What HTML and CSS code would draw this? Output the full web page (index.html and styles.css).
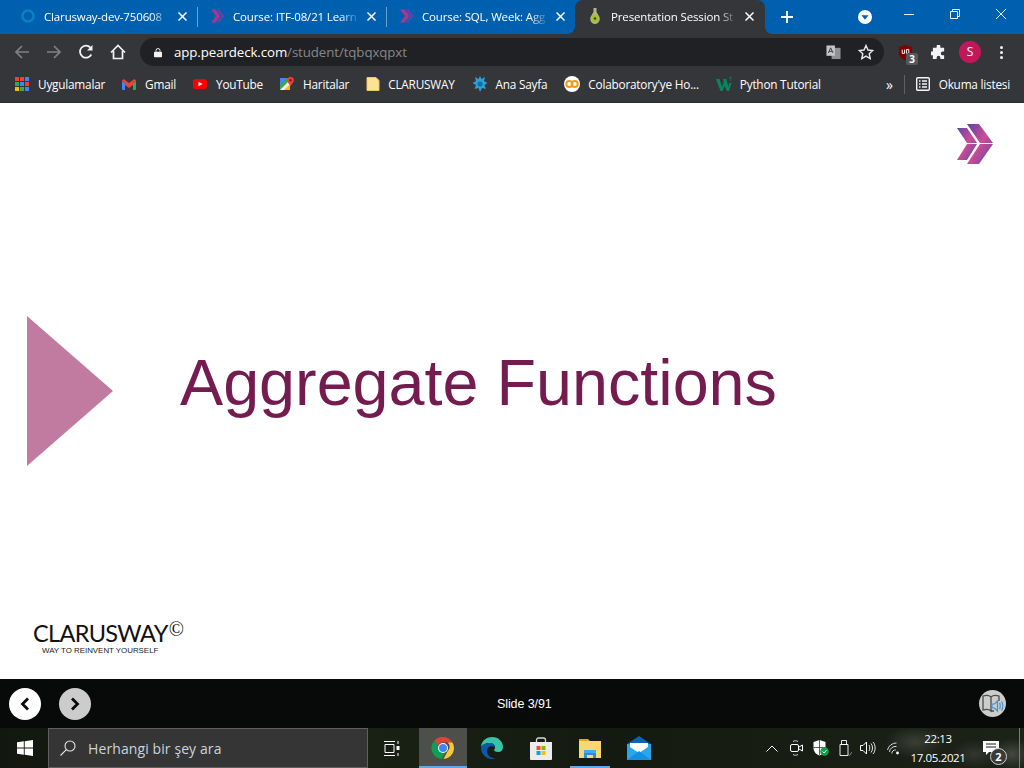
FILE: index.html
```html
<!DOCTYPE html>
<html lang="en">

<head>
    <meta charset='utf-8'>
    <title>Presentation Session Student</title>
    <link rel="stylesheet" href="styles.css">
</head>

<body>
    <div class="tabstrip">
        <div class="tab">
            <svg class="favicon" viewBox="0 0 16 16"><circle cx="8" cy="8" r="5.5" fill="none" stroke="#0f7fc4" stroke-width="2.6"/></svg>
            <span class="tab-title">Clarusway-dev-750608</span>
            <svg class="tab-x" viewBox="0 0 9 9"><path d="M.5.5l8 8M8.500.5l-8 8" stroke="#fff" stroke-width="1.500"/></svg>
        </div>
        <div class="tab sep">
            <svg class="favicon" viewBox="0 0 16 16"><path d="M2 1.500h4.500l5 6.500-5 6.500H2L7 8z" fill="#a8378f"/><path d="M7.500 1.500h3L15.500 8l-5 6.500h-3l5-6.500z" fill="#5f45a8"/></svg>
            <span class="tab-title">Course: ITF-08/21 Learn</span>
            <svg class="tab-x" viewBox="0 0 9 9"><path d="M.5.5l8 8M8.500.5l-8 8" stroke="#fff" stroke-width="1.500"/></svg>
        </div>
        <div class="tab sep">
            <svg class="favicon" viewBox="0 0 16 16"><path d="M2 1.500h4.500l5 6.500-5 6.500H2L7 8z" fill="#a8378f"/><path d="M7.500 1.500h3L15.500 8l-5 6.500h-3l5-6.500z" fill="#5f45a8"/></svg>
            <span class="tab-title">Course: SQL, Week: Agg</span>
            <svg class="tab-x" viewBox="0 0 9 9"><path d="M.5.5l8 8M8.500.5l-8 8" stroke="#fff" stroke-width="1.500"/></svg>
        </div>
        <div class="tab active">
            <svg class="favicon" viewBox="0 0 16 16"><path d="M6.500 0h3v4l3 5c1 4-1.500 7-4.500 7s-5.500-3-4.500-7l3-5z" fill="#b9b48c"/><ellipse cx="8" cy="10.500" rx="3.600" ry="4" fill="#a5c22c"/><circle cx="8" cy="10.500" r="1.300" fill="#3c4a18"/></svg>
            <span class="tab-title">Presentation Session St</span>
            <svg class="tab-x" viewBox="0 0 9 9"><path d="M.5.5l8 8M8.500.5l-8 8" stroke="#fff" stroke-width="1.500"/></svg>
        </div>
        <svg class="newtab" viewBox="0 0 12 12"><path d="M6 0v12M0 6h12" stroke="#fff" stroke-width="1.800"/></svg>
        <div class="win-btns">
            <svg class="profile-drop" viewBox="0 0 14 14"><circle cx="7" cy="7" r="7" fill="#fff"/><path d="M3.500 5.300h7L7 9.800z" fill="#0060b0"/></svg>
            <svg class="win" viewBox="0 0 46 12"><path d="M18 6.500h10" stroke="#e8eef6"/></svg>
            <svg class="win" viewBox="0 0 46 12"><path d="M18.500 3.500h7v7h-7zM20.500 3.500v-2h7v7h-2" fill="none" stroke="#e8eef6"/></svg>
            <svg class="win" viewBox="0 0 46 12"><path d="M18 1l10 10M28 1L18 11" stroke="#e8eef6"/></svg>
        </div>
    </div>

    <div class="toolbar">
        <svg class="nav" viewBox="0 0 16 16"><path d="M15 8H2M8 2L2 8l6 6" fill="none" stroke="#7f8184" stroke-width="1.700"/></svg>
        <svg class="nav" viewBox="0 0 16 16"><path d="M1 8h13M8 2l6 6-6 6" fill="none" stroke="#7f8184" stroke-width="1.700"/></svg>
        <svg class="nav" viewBox="0 0 16 16"><path d="M13.300 10.500A6 6 0 1 1 12.400 3.600" fill="none" stroke="#f1f3f4" stroke-width="1.800"/><path d="M14.500 1v5.500H9z" fill="#f1f3f4"/></svg>
        <svg class="nav" viewBox="0 0 16 16"><path d="M1 8.500L8 1.500l7 7M3.500 7v7.500h9V7" fill="none" stroke="#f1f3f4" stroke-width="1.700"/></svg>
        <div class="omnibox">
            <svg class="lock" viewBox="0 0 10 12"><path d="M2.500 5V3.500a2.500 2.500 0 0 1 5 0V5" fill="none" stroke="#f1f3f4" stroke-width="1.200"/><rect y="5" width="10" height="7" rx="1" fill="#f1f3f4"/></svg>
            <span class="url">app.peardeck.com<span class="url-path">/student/tqbqxqpxt</span></span>
            <svg class="translate" viewBox="0 0 16 16"><rect x="6" y="3" width="9.500" height="12" fill="#8f9194"/><rect x="0.500" y="0.500" width="9" height="11" fill="#c4c6c8"/><path d="M2.500 8.500L5 3l2.500 5.500M3.500 6.800h3" fill="none" stroke="#35363a" stroke-width="1"/></svg>
            <svg class="star" viewBox="0 0 16 16"><path d="M8 1.500l2 4.500 4.800.5-3.600 3.200 1 4.800L8 12.100l-4.200 2.400 1-4.800L1.200 6.500 6 6z" fill="none" stroke="#e8eaed" stroke-width="1.400"/></svg>
        </div>
        <div class="ext ublock">
            <svg viewBox="0 0 16 18"><path d="M8 1l7 2.300v6c0 4-3.500 6.700-7 8-3.500-1.300-7-4-7-8v-6z" fill="#800000"/><path d="M4.500 6v4h2.500V6M9 10V6h2.500v4z" fill="none" stroke="#fff" stroke-width="1"/></svg>
            <span class="badge">3</span>
        </div>
        <svg class="ext puzzle" viewBox="0 0 16 16"><path d="M6 1.500a2 2 0 0 1 4 0V3h4v4h-1.500a2 2 0 0 0 0 4H14v4h-4v-1.500a2 2 0 0 0-4 0V15H2v-4H.5a2 2 0 0 1 0-4H2V3h4z" fill="#f1f3f4"/></svg>
        <span class="avatar">S</span>
        <span class="menu-dots"><i></i><i></i><i></i></span>
    </div>

    <div class="bookmarks">
        <div class="bm bm-apps">
            <span class="apps-grid"><i class="r"></i><i class="r"></i><i class="b"></i><i class="g"></i><i class="b"></i><i class="r"></i><i class="y"></i><i class="g"></i><i class="b"></i></span>
            Uygulamalar
        </div>
        <div class="bm">
            <svg class="bm-ico" viewBox="0 0 14 12"><path d="M0 3v8a1 1 0 0 0 1 1h2V5z" fill="#4285f4"/><path d="M14 3v8a1 1 0 0 1-1 1h-2V5z" fill="#34a853"/><path d="M0 3l3 2v2l4 3 4-3V5l3-2a1.700 1.700 0 0 0-3-1L7 5 3 2a1.700 1.700 0 0 0-3 1z" fill="#ea4335"/></svg>
            Gmail
        </div>
        <div class="bm">
            <svg class="bm-ico" viewBox="0 0 14 10"><rect width="14" height="10" rx="2.500" fill="#f00"/><path d="M5.500 2.800L9.500 5l-4 2.200z" fill="#fff"/></svg>
            YouTube
        </div>
        <div class="bm">
            <svg class="bm-ico" viewBox="0 0 14 14"><path d="M0 1h10v12H0z" fill="#34a853"/><path d="M0 13L10 3v10z" fill="#f4f4f0"/><path d="M0 1h7L0 8z" fill="#4285f4"/><path d="M4 13l6-6v6z" fill="#fbbc04"/><path d="M10.500 0a3.300 3.300 0 0 1 3.300 3.300c0 2.200-2 3.500-3.300 6-1.300-2.500-3.300-3.800-3.300-6A3.300 3.300 0 0 1 10.500 0z" fill="#ea4335"/><circle cx="10.500" cy="3.300" r="1.200" fill="#7a1b12"/></svg>
            Haritalar
        </div>
        <div class="bm">
            <svg class="bm-ico tight" viewBox="0 0 14 14"><path d="M1 .5h9l3 3v10H1z" fill="#fde293" stroke="#e8c766"/></svg>
            CLARUSWAY
        </div>
        <div class="bm">
            <svg class="bm-ico wide" viewBox="0 0 16 16"><path d="M8 0l1.500 3L13 1l-1 4 3.500 2-3 2 1.500 4-4-1-2 4-1.500-4-4 1 1.500-4-3.500-2 3.500-2-1-4 3.500 2z" fill="#2a9fd8"/><circle cx="8" cy="8" r="2.500" fill="#0f6ea6"/></svg>
            Ana Sayfa
        </div>
        <div class="bm">
            <svg class="bm-ico wide" viewBox="0 0 16 16"><circle cx="8" cy="8" r="8" fill="#fff"/><circle cx="5.300" cy="8" r="3" fill="none" stroke="#f09a16" stroke-width="2"/><circle cx="10.700" cy="8" r="3" fill="none" stroke="#f09a16" stroke-width="2"/></svg>
            Colaboratory'ye Ho...
        </div>
        <div class="bm">
            <svg class="bm-ico wide" viewBox="0 0 16 14"><path d="M0 2h3.500L6 10 7.800 5 7 2h3.300l2 8 1-4h2.200l-2.500 8h-2L8.500 9 6.500 14h-2z" fill="#04885f"/><path d="M13 .5h2.500L14.200 2c1 0 1.300 1.500 0 1.800" fill="none" stroke="#04885f" stroke-width=".7"/></svg>
            Python Tutorial
        </div>
        <div class="bm-end">
            <span class="more">&#187;</span>
            <span class="bm-div"></span>
            <svg class="bm-ico" viewBox="0 0 14 14"><rect x=".7" y=".7" width="12.600" height="12.600" rx="1" fill="none" stroke="#f1f3f4" stroke-width="1.400"/><path d="M3 4h1.500M6 4h5M3 7h1.500M6 7h5M3 10h1.500M6 10h5" stroke="#f1f3f4" stroke-width="1.300"/></svg>
            Okuma listesi
        </div>
    </div>

    <div class="slide">
        <svg class="slide-logo" viewBox="0 0 36 40">
            <defs>
                <linearGradient id="lg" x1="0" y1="0" x2="1" y2="1">
                    <stop offset="0" stop-color="#5c45a3"/>
                    <stop offset="0.500" stop-color="#cf4b95"/>
                    <stop offset="1" stop-color="#4e4aa8"/>
                </linearGradient>
            </defs>
            <path d="M0 4h10l10 15H10zM10 20h10L10 36H0z" fill="url(#lg)"/>
            <path d="M10 0h12l14 19H23zM23 20h13L22 40H10z" fill="url(#lg)"/>
        </svg>
        <div class="hero">
            <svg class="hero-arrow" viewBox="0 0 86 150"><path d="M0 0l86 75-86 75z" fill="#c27ba0"/></svg>
            <h1 class="hero-title">Aggregate Functions</h1>
        </div>
        <div class="brand">
            <div class="brand-name">CLARUSWAY<span class="brand-c">&copy;</span></div>
            <div class="brand-sub">WAY TO REINVENT YOURSELF</div>
        </div>
    </div>

    <div class="player">
        <span class="round white"><svg viewBox="0 0 12 14"><path d="M9 1.500L3.500 7 9 12.500" fill="none" stroke="#0a0a0a" stroke-width="2.800"/></svg></span>
        <span class="round grey"><svg viewBox="0 0 12 14"><path d="M3 1.500L8.500 7 3 12.500" fill="none" stroke="#0a0a0a" stroke-width="2.800"/></svg></span>
        <span class="slide-count">Slide 3/91</span>
        <span class="round grey audio">
            <svg viewBox="0 0 22 20"><path d="M1 2c3-1 6-1 8 1v14c-2-2-5-2-8-1zM9 3c2-2 5-2 8-1v5M9 17h3" fill="none" stroke="#4a4c4e" stroke-width="1.300"/><path d="M10 10h2.500l3-3v10l-3-3H10z" fill="none" stroke="#3f93d3" stroke-width="1.200"/><path d="M17.500 9c1 1 1 5 0 6M19.500 7.500c1.800 2 1.800 7 0 9" fill="none" stroke="#3f93d3" stroke-width="1.200"/></svg>
        </span>
    </div>

    <div class="taskbar">
        <svg class="start" viewBox="0 0 16 16"><path d="M0 2.300l6.800-1v6.200H0zM7.700 1.200L16 0v7.500H7.700zM0 8.400h6.800v6.300l-6.800-1zM7.700 8.400H16V16l-8.300-1.200z" fill="#fff"/></svg>
        <div class="search">
            <svg class="search-ico" viewBox="0 0 16 16"><circle cx="10" cy="6" r="5" fill="none" stroke="#e6e6e6" stroke-width="1.100"/><path d="M6.300 9.700L.5 15.500" stroke="#e6e6e6" stroke-width="1.100"/></svg>
            Herhangi bir şey ara
        </div>
        <div class="task taskview">
            <svg viewBox="0 0 16 15"><path d="M0 .5h11M0 14.500h11M1 3.500h9v8H1z" fill="none" stroke="#fff"/><path d="M14 0v3M14 12v3" stroke="#fff"/><rect x="12.500" y="5" width="3" height="4" fill="#fff"/></svg>
        </div>
        <div class="task running">
            <svg class="app" viewBox="0 0 24 24">
                <path d="M12 1a11 11 0 0 1 9.500 5.500H12a5.500 5.500 0 0 0-5.200 3.700L3.400 4.500A11 11 0 0 1 12 1z" fill="#db4437"/>
                <path d="M21.500 6.500A11 11 0 0 1 12.500 23l4.200-8a5.500 5.500 0 0 0 0-8.500z" fill="#fcc934"/>
                <path d="M3.400 4.500l4.500 7.800a5.500 5.500 0 0 0 6.300 4.200L10.800 23A11 11 0 0 1 3.400 4.500z" fill="#0f9d58"/>
                <circle cx="12" cy="12" r="5" fill="#fff"/><circle cx="12" cy="12" r="4" fill="#4285f4"/>
            </svg>
        </div>
        <div class="task">
            <svg class="app" viewBox="0 0 24 24">
                <path d="M1 12C1 5 6 1 12 1c7 0 11 5 11 10 0 3-2 5-5 5-2 0-4-1-4-2 1-1 1-2 1-3 0-2-2-4-5-4-4 0-9 2-9 5z" fill="#39c4a8"/>
                <path d="M1 12c0-3 5-5 9-5 3 0 5 2 5 4-4-2-8 0-8 4 0 3 2 6 6 7 3 1 6 0 8-2-2 2-5 3-9 3C6 23 1 18 1 12z" fill="#0c59a4"/>
            </svg>
        </div>
        <div class="task">
            <svg class="app" viewBox="0 0 24 24">
                <path d="M7.500 6V4a2 2 0 0 1 2-2h5a2 2 0 0 1 2 2v2" fill="none" stroke="#d9d9d9" stroke-width="1.300"/>
                <path d="M1 6h22v17a1 1 0 0 1-1 1H2a1 1 0 0 1-1-1z" fill="#ececec"/>
                <rect x="7.500" y="10" width="4" height="4" fill="#f25022"/><rect x="12.500" y="10" width="4" height="4" fill="#7fba00"/><rect x="7.500" y="15" width="4" height="4" fill="#00a4ef"/><rect x="12.500" y="15" width="4" height="4" fill="#ffb900"/>
            </svg>
        </div>
        <div class="task open">
            <svg class="app" viewBox="0 0 24 24">
                <path d="M1 3h9l2 2h11v6H1z" fill="#e0a82e"/><rect x="1" y="5" width="22" height="17" fill="#f9d774"/>
                <path d="M6 22v-7h12v7h-3v-3H9v3z" fill="#2b8fd6"/><rect x="6" y="14" width="12" height="3" fill="#3ab0e8"/>
            </svg>
        </div>
        <div class="task">
            <svg class="app" viewBox="0 0 24 24">
                <path d="M0 8l12-8 12 8v2H0z" fill="#0a64b4"/><path d="M0 8h24v16H0z" fill="#28a8ea"/>
                <path d="M3 7h18v4l-9 6-9-6z" fill="#fff"/><path d="M0 24l12-9 12 9z" fill="#1490df"/>
            </svg>
        </div>
        <div class="tray">
            <svg class="t-chev" viewBox="0 0 12 7"><path d="M.5 6.500L6 1l5.500 5.500" fill="none" stroke="#fff"/></svg>
            <svg class="t-cam" viewBox="0 0 13 16"><path d="M3 1.500c2-1 3-1 5 0M3 14.500c2 1 3 1 5 0" fill="none" stroke="#fff" stroke-width=".8"/><rect x=".5" y="4.500" width="8" height="7" rx="1.500" fill="none" stroke="#fff"/><path d="M9 7l3.500-2v6L9 9" fill="none" stroke="#fff"/></svg>
            <svg class="t-shield" viewBox="0 0 16 16"><path d="M6.500 0l6 2v6c0 4-3 6.500-6 7.500-3-1-6-3.500-6-7.500V2z" fill="#fff"/><path d="M6.500 0v15M.5 7.500h12" stroke="#1a1d17" stroke-width=".7"/><circle cx="11.500" cy="11.500" r="4.300" fill="#12a14b"/><path d="M9.500 11.500l1.500 1.500 2.500-2.800" fill="none" stroke="#fff" stroke-width="1"/></svg>
            <svg class="t-usb" viewBox="0 0 13 16"><path d="M2.500.5h5v4h-5zM1 4.500h8v11H1z" fill="none" stroke="#fff" stroke-width=".9"/><path d="M9 14l1.500 1.500L13 12" fill="none" stroke="#9a9a9a" stroke-width=".8"/></svg>
            <svg class="t-vol" viewBox="0 0 16 14"><path d="M.5 4.500h2.500L6.500 1v12L3 9.500H.5z" fill="none" stroke="#fff"/><path d="M9 4c1 1.500 1 4.500 0 6M11 2.500c2 2 2 7 0 9M13 1c2.800 3 2.800 9 0 12" fill="none" stroke="#fff" stroke-width=".9"/></svg>
            <svg class="t-wifi" viewBox="0 0 14 13"><path d="M.5 8a9 9 0 0 1 9-7M2.500 10a6 6 0 0 1 7-5.500M4.800 11.500a3.500 3.500 0 0 1 4-3.500" fill="none" stroke="#d9d9d9" stroke-width="1"/><circle cx="10.500" cy="11" r="1.400" fill="#fff"/></svg>
            <div class="clock"><span>22:13</span><span>17.05.2021</span></div>
            <div class="notif">
                <svg viewBox="0 0 16 15"><path d="M0 0h16v11H6l-3 3v-3H0z" fill="#fff"/><path d="M3 3h10M3 6h10" stroke="#1a1d17"/></svg>
                <span class="notif-count">2</span>
            </div>
            <span class="show-desktop"></span>
        </div>
    </div>
</body>

</html>
```

FILE: styles.css
```css
* {
    box-sizing: border-box;
}

html,
body {
    margin: 0;
    height: 100%;
    overflow: hidden;
}

body {
    width: 1024px;
    height: 768px;
    font-family: "Open Sans", "Noto Sans", sans-serif;
    font-size: 12px;
    color: #fff;
    background: #fff;
}

svg {
    display: block;
    flex: none;
}

/* tab strip */

.tabstrip {
    display: flex;
    align-items: center;
    height: 34px;
    padding-left: 8px;
    background: #0060b0;
}

.tab {
    display: flex;
    align-items: center;
    width: 189px;
    height: 34px;
    padding: 0 7px 2px 12px;
    position: relative;
}

.tab.sep::before {
    content: "";
    position: absolute;
    left: 0;
    top: 7px;
    height: 20px;
    width: 1px;
    background: #6f9fcd;
}

.tab.active {
    width: 190px;
    padding-right: 8px;
    background: #35363a;
    border-radius: 8px 8px 0 0;
}

.tab.active::before,
.tab.active::after {
    content: "";
    position: absolute;
    bottom: 0;
    width: 8px;
    height: 8px;
}

.tab.active::before {
    left: -8px;
    background: radial-gradient(circle at 0 0, transparent 8px, #35363a 8px);
}

.tab.active::after {
    right: -8px;
    background: radial-gradient(circle at 100% 0, transparent 8px, #35363a 8px);
}

.favicon {
    width: 16px;
    height: 16px;
    margin-right: 8px;
}

.tab-title {
    flex: 1;
    overflow: hidden;
    white-space: nowrap;
    font-size: 11.500px;
    letter-spacing: -0.150px;
    -webkit-mask-image: linear-gradient(to right, #000 84%, transparent 99%);
    mask-image: linear-gradient(to right, #000 84%, transparent 99%);
}

.tab-x {
    width: 9px;
    height: 9px;
    margin: 0 3.500px 0 6px;
}

.newtab {
    width: 12px;
    height: 12px;
    margin-left: 16px;
}

.win-btns {
    display: flex;
    align-items: center;
    margin-left: auto;
}

.profile-drop {
    width: 14px;
    height: 14px;
    margin-right: 14px;
    margin-top: -1px;
}

.win {
    width: 46px;
    height: 12px;
    margin-top: -6px;
}

/* toolbar */

.toolbar {
    display: flex;
    align-items: center;
    height: 34px;
    padding: 2px 0 0 14px;
    background: #35363a;
}

.nav {
    width: 16px;
    height: 16px;
    margin-right: 16px;
}

.omnibox {
    display: flex;
    align-items: center;
    width: 744px;
    height: 28px;
    margin-left: -2px;
    padding: 0 10px 0 14px;
    border-radius: 14px;
    background: #202124;
}

.lock {
    width: 8px;
    height: 11px;
    margin-right: 12px;
}

.url {
    font-size: 13.300px;
    letter-spacing: -0.100px;
}

.url-path {
    color: #85878a;
}

.translate {
    width: 15px;
    height: 15px;
    margin-left: auto;
}

.star {
    width: 16px;
    height: 16px;
    margin-left: 17px;
}

.ext {
    flex: none;
}

.ublock {
    position: relative;
    width: 15px;
    height: 17px;
    margin-left: 14px;
}

.badge {
    position: absolute;
    left: 8px;
    top: 9px;
    width: 12px;
    height: 12px;
    border-radius: 2px;
    background: #55575a;
    font-size: 10px;
    font-weight: 700;
    line-height: 12px;
    text-align: center;
}

.puzzle {
    width: 15px;
    height: 15px;
    margin-left: 18px;
}

.avatar {
    width: 22px;
    height: 22px;
    margin-left: 13px;
    border-radius: 50%;
    background: #c2185b;
    font-size: 12px;
    line-height: 22px;
    text-align: center;
}

.menu-dots {
    display: flex;
    flex-direction: column;
    gap: 2px;
    margin-left: 19px;
}

.menu-dots i {
    width: 3px;
    height: 3px;
    border-radius: 50%;
    background: #f1f3f4;
}

/* bookmarks */

.bookmarks {
    display: flex;
    align-items: center;
    height: 35px;
    padding: 0 0 2px 15px;
    background: #35363a;
    border-bottom: 1px solid #2a2b2e;
    font-size: 11.800px;
    letter-spacing: -0.220px;
}

.bm {
    display: flex;
    align-items: center;
    margin-right: 17px;
    white-space: nowrap;
}

.bm-ico {
    width: 14px;
    height: 14px;
    margin-right: 9px;
}

.bm-ico.tight {
    margin-right: 8px;
}

.bm-ico.wide {
    width: 16px;
    height: 16px;
    margin-right: 8px;
}

.apps-grid {
    display: grid;
    grid-template-columns: repeat(3, 4px);
    gap: 1px;
    margin-right: 9px;
}

.apps-grid i {
    height: 4px;
}

.apps-grid .r {
    background: #ea4335;
}

.apps-grid .b {
    background: #4285f4;
}

.apps-grid .g {
    background: #34a853;
}

.apps-grid .y {
    background: #fbbc04;
}

.bm-end {
    display: flex;
    align-items: center;
    margin-left: auto;
    margin-right: 14px;
    white-space: nowrap;
}

.more {
    font-size: 14px;
    margin-right: 11px;
}

.bm-div {
    width: 1px;
    height: 19px;
    margin-right: 11px;
    background: #5f6064;
}

/* slide */

.slide {
    display: flex;
    flex-direction: column;
    height: 576px;
    background: #fff;
}

.slide-logo {
    width: 36px;
    height: 40px;
    margin: 21px 31px 0 auto;
}

.hero {
    display: flex;
    align-items: center;
    margin-top: 152px;
    padding-left: 27px;
}

.hero-arrow {
    width: 86px;
    height: 150px;
}

.hero-title {
    margin: 0 0 18px 67px;
    font-family: "Liberation Sans", Arial, sans-serif;
    font-size: 64.700px;
    font-weight: 400;
    color: #741b4f;
}

.brand {
    margin-top: auto;
    padding: 0 0 22px 33px;
    color: #111;
}

.brand-name {
    font-family: "Lato", "Liberation Sans", sans-serif;
    font-size: 23.500px;
    line-height: 23px;
    letter-spacing: -0.650px;
}

.brand-c {
    position: relative;
    top: -6px;
    margin-left: 1px;
    font-family: "Liberation Serif", serif;
    font-size: 20px;
}

.brand-sub {
    margin-top: -2px;
    padding-left: 9px;
    font-family: "Liberation Sans", Arial, sans-serif;
    font-size: 7.900px;
    line-height: 12px;
    color: #222;
}

/* player bar */

.player {
    display: flex;
    align-items: center;
    height: 49px;
    padding: 0 18px 0 9px;
    background: #080a0a;
}

.round {
    display: flex;
    align-items: center;
    justify-content: center;
    width: 32px;
    height: 32px;
    border-radius: 50%;
}

.round svg {
    width: 12px;
    height: 14px;
}

.round.white {
    background: #fff;
    margin-right: 18px;
}

.round.grey {
    background: #cbcccb;
}

.slide-count {
    margin-left: 406px;
    font-family: "Liberation Sans", Arial, sans-serif;
    font-size: 12.500px;
    letter-spacing: -0.100px;
}

.round.audio {
    width: 27px;
    height: 27px;
    margin-left: auto;
}

.round.audio svg {
    width: 22px;
    height: 20px;
}

/* windows taskbar */

.taskbar {
    display: flex;
    align-items: center;
    height: 40px;
    background:
        radial-gradient(ellipse 30px 16px at 915px 14px, #3a3f35, transparent),
        radial-gradient(ellipse 24px 14px at 975px 26px, #33372f, transparent),
        radial-gradient(ellipse 20px 16px at 1012px 26px, #45483f, transparent),
        linear-gradient(90deg, #12180f, #1b2215 30%, #141a10 60%, #1c2218);
}

.start {
    width: 16px;
    height: 16px;
    margin: 0 15px 0 17px;
}

.search {
    display: flex;
    align-items: center;
    width: 320px;
    height: 40px;
    padding-left: 11px;
    background: #353535;
    border: 1px solid #5f5f5f;
    font-size: 14px;
    letter-spacing: 0.100px;
    color: #c9d4dc;
}

.search-ico {
    width: 16px;
    height: 16px;
    margin-right: 12px;
}

.task {
    display: flex;
    align-items: center;
    justify-content: center;
    width: 49px;
    height: 40px;
}

.task.taskview {
    width: 51px;
    padding-right: 3px;
}

.taskview svg {
    width: 16px;
    height: 15px;
}

.task.running {
    width: 48px;
    background: linear-gradient(#62a8e5, #62a8e5) bottom / 100% 2px no-repeat #4c4f4a;
}

.task.open {
    background: linear-gradient(#62a8e5, #62a8e5) bottom / 40px 2px no-repeat;
}

.app {
    width: 24px;
    height: 24px;
}

.tray {
    display: flex;
    align-items: center;
    margin-left: auto;
    height: 40px;
}

.t-chev {
    width: 12px;
    height: 7px;
    margin-right: 12px;
}

.t-cam {
    width: 13px;
    height: 16px;
    margin-right: 10px;
}

.t-shield {
    width: 16px;
    height: 16px;
    margin-right: 10px;
}

.t-usb {
    width: 13px;
    height: 16px;
    margin-right: 8px;
}

.t-vol {
    width: 16px;
    height: 14px;
    margin-right: 11px;
}

.t-wifi {
    width: 14px;
    height: 13px;
}

.clock {
    display: flex;
    flex-direction: column;
    align-items: center;
    width: 56px;
    margin-left: 9px;
    font-size: 11.500px;
    line-height: 19px;
    letter-spacing: -0.350px;
}

.notif {
    position: relative;
    width: 20px;
    margin-left: 17px;
}

.notif svg {
    width: 16px;
    height: 15px;
}

.notif-count {
    position: absolute;
    left: 7px;
    top: 7px;
    width: 17px;
    height: 17px;
    border: 1px solid #cfcfcf;
    border-radius: 50%;
    background: #3a3a3a;
    font-size: 11px;
    font-weight: 700;
    line-height: 15px;
    text-align: center;
}

.show-desktop {
    width: 1px;
    height: 40px;
    margin-left: 16px;
    margin-right: 4px;
    background: #7a7d78;
}
```
